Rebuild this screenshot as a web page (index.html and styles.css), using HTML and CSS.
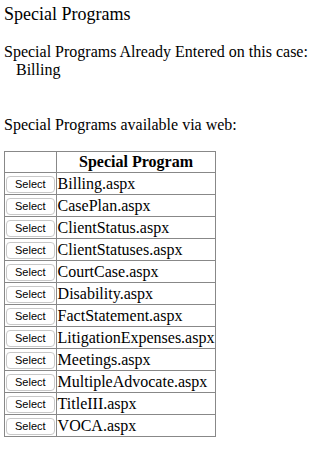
FILE: index.html
```html
<!DOCTYPE html>
<html lang="en">
<head>
    <meta charset="UTF-8">
    <title>Special Programs</title>
    <link rel="stylesheet" href="styles.css">
</head>
<body>
    <div class="page-title">Special Programs</div>

    <div class="entered">
        <div>Special Programs Already Entered on this case:</div>
        <div class="entered-item">Billing</div>
    </div>

    <div class="available">Special Programs available via web:</div>

    <table class="programs">
        <tr>
            <th></th>
            <th>Special Program</th>
        </tr>
        <tr><td><button class="select-btn">Select</button></td><td>Billing.aspx</td></tr>
        <tr><td><button class="select-btn">Select</button></td><td>CasePlan.aspx</td></tr>
        <tr><td><button class="select-btn">Select</button></td><td>ClientStatus.aspx</td></tr>
        <tr><td><button class="select-btn">Select</button></td><td>ClientStatuses.aspx</td></tr>
        <tr><td><button class="select-btn">Select</button></td><td>CourtCase.aspx</td></tr>
        <tr><td><button class="select-btn">Select</button></td><td>Disability.aspx</td></tr>
        <tr><td><button class="select-btn">Select</button></td><td>FactStatement.aspx</td></tr>
        <tr><td><button class="select-btn">Select</button></td><td>LitigationExpenses.aspx</td></tr>
        <tr><td><button class="select-btn">Select</button></td><td>Meetings.aspx</td></tr>
        <tr><td><button class="select-btn">Select</button></td><td>MultipleAdvocate.aspx</td></tr>
        <tr><td><button class="select-btn">Select</button></td><td>TitleIII.aspx</td></tr>
        <tr><td><button class="select-btn">Select</button></td><td>VOCA.aspx</td></tr>
    </table>
</body>
</html>
```

FILE: styles.css
```css
body {
    margin: 4px;
    font-family: "Liberation Serif", "Times New Roman", serif;
    font-size: 16px;
    color: #000;
    background-color: #fff;
}
.page-title {
    font-size: 18px;
}
.entered {
    margin-top: 18px;
}
.entered-item {
    padding-left: 12px;
}
.available {
    margin-top: 37px;
}
.programs {
    margin-top: 17px;
    border-collapse: collapse;
    border: 1px solid #888;
}
.programs th,
.programs td {
    border: 1px solid #888;
    padding: 1px;
    height: 19px;
}
.programs th {
    height: 18px;
    font-weight: bold;
    text-align: center;
}
.select-btn {
    font-family: "Liberation Sans", Arial, sans-serif;
    font-size: 11px;
    height: 17px;
    padding: 0 8px;
    background-color: #fff;
    border: 1px solid #c8c8c8;
    border-radius: 4px;
    color: #000;
}
```
